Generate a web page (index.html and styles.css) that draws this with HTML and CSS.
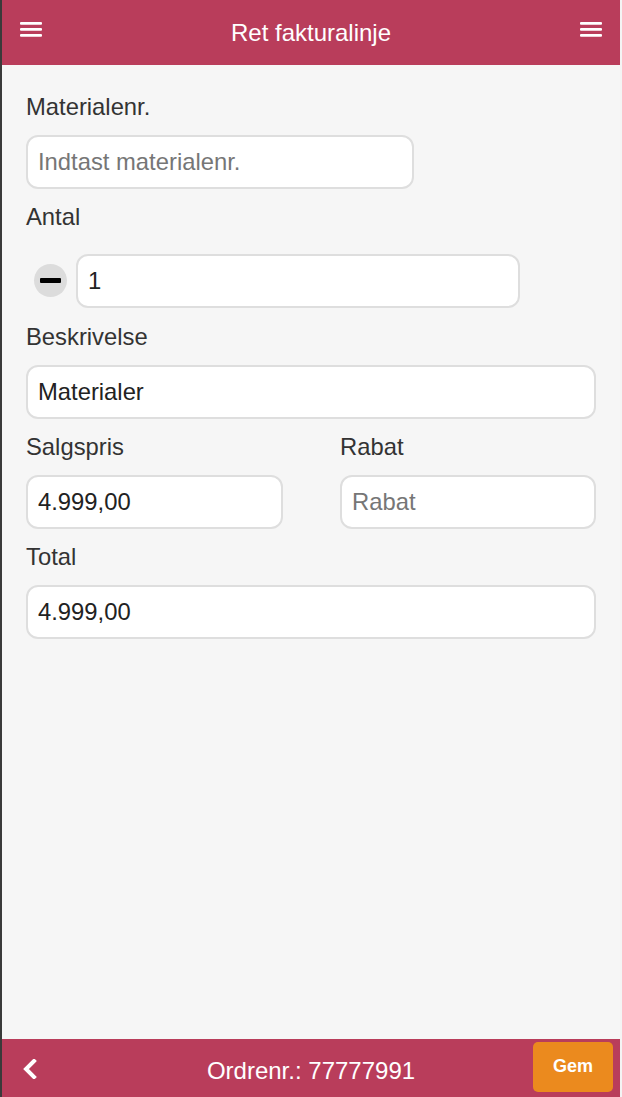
FILE: index.html
```html
<!DOCTYPE html>
<html lang="da">
<head>
<meta charset="utf-8">
<title>Ret fakturalinje</title>
<link rel="stylesheet" href="styles.css">
</head>
<body>
<div class="page">
  <header class="topbar">
    <span class="menu-icon">
      <svg width="22" height="15" viewBox="0 0 22 15"><rect x="0" y="0" width="22" height="2.8" rx="1"/><rect x="0" y="6" width="22" height="2.8" rx="1"/><rect x="0" y="12" width="22" height="2.8" rx="1"/></svg>
    </span>
    <h1 class="title">Ret fakturalinje</h1>
    <span class="menu-icon">
      <svg width="22" height="15" viewBox="0 0 22 15"><rect x="0" y="0" width="22" height="2.8" rx="1"/><rect x="0" y="6" width="22" height="2.8" rx="1"/><rect x="0" y="12" width="22" height="2.8" rx="1"/></svg>
    </span>
  </header>

  <main class="content">
    <label class="label">Materialenr.</label>
    <input class="field field-material" type="text" placeholder="Indtast materialenr.">

    <label class="label">Antal</label>
    <div class="qty-row">
      <span class="minus"><span class="minus-bar"></span></span>
      <input class="field field-qty" type="text" value="1">
    </div>

    <label class="label">Beskrivelse</label>
    <input class="field" type="text" value="Materialer">

    <div class="two-col">
      <div class="col">
        <label class="label">Salgspris</label>
        <input class="field" type="text" value="4.999,00">
      </div>
      <div class="col">
        <label class="label">Rabat</label>
        <input class="field" type="text" placeholder="Rabat">
      </div>
    </div>

    <label class="label">Total</label>
    <input class="field" type="text" value="4.999,00">
  </main>

  <footer class="bottombar">
    <span class="back">
      <svg width="16" height="20" viewBox="0 0 16 20"><polyline points="12,2 4,10 12,18" fill="none" stroke="#fff" stroke-width="4" stroke-linecap="square"/></svg>
    </span>
    <span class="order">Ordrenr.: 77777991</span>
    <button class="save" type="button">Gem</button>
  </footer>
</div>
</body>
</html>
```

FILE: styles.css
```css
html, body {
  margin: 0;
  padding: 0;
  background: #f4f4f4;
  height: 100%;
}

body {
  font-family: "Liberation Sans", Arial, sans-serif;
}

.page {
  width: 618px;
  height: 100vh;
  border-left: 2px solid #3a3a3a;
  background: #f6f6f6;
  display: flex;
  flex-direction: column;
}

.topbar {
  height: 65px;
  flex: none;
  background: #b93d5b;
  display: flex;
  align-items: center;
  padding: 0 18px;
  box-sizing: border-box;
}

.menu-icon {
  width: 22px;
  height: 15px;
  align-self: flex-start;
  margin-top: 22px;
  display: block;
}

.menu-icon svg {
  display: block;
  fill: #fff;
}

.title {
  flex: 1;
  margin: 0;
  text-align: center;
  color: #fff;
  font-weight: normal;
  font-size: 24px;
  line-height: 28px;
}

.content {
  flex: 1;
  padding: 28px 24px 0;
  display: flex;
  flex-direction: column;
  align-items: flex-start;
}

.label {
  display: block;
  font-size: 23.8px;
  line-height: 28px;
  color: #333;
  margin-bottom: 14px;
}

.field {
  display: block;
  box-sizing: border-box;
  width: 570px;
  height: 54px;
  margin: 0 0 14px;
  padding: 0 10px;
  border: 2px solid #dedede;
  border-radius: 12px;
  background: #fff;
  font-family: "Liberation Sans", Arial, sans-serif;
  font-size: 23.8px;
  color: #222;
  outline: none;
}

.field::placeholder {
  color: #767676;
}

.field-material {
  width: 388px;
}

.qty-row {
  display: flex;
  align-items: center;
  margin-top: 9px;
  margin-bottom: 1px;
}

.minus {
  width: 33px;
  height: 33px;
  border-radius: 50%;
  background: #dcdcdc;
  margin-left: 8px;
  margin-right: 9px;
  margin-bottom: 16px;
  display: flex;
  align-items: center;
  justify-content: center;
  flex: none;
}

.minus-bar {
  width: 21px;
  height: 5px;
  background: #000;
  border-radius: 1px;
}

.field-qty {
  width: 444px;
}

.two-col {
  display: grid;
  grid-template-columns: 257px 256px;
  column-gap: 57px;
  width: 570px;
}

.col .field {
  width: 100%;
}

.bottombar {
  height: 58px;
  flex: none;
  background: #b93d5b;
  display: grid;
  grid-template-columns: 1fr auto 1fr;
  align-items: center;
}

.back {
  justify-self: start;
  margin-left: 20px;
  margin-top: 2px;
  display: block;
  width: 16px;
  height: 20px;
}

.back svg {
  display: block;
}

.order {
  color: #fff;
  font-size: 24px;
  line-height: 28px;
  padding-top: 5px;
}

.save {
  justify-self: end;
  margin-right: 7px;
  margin-top: -2px;
  width: 80px;
  height: 50px;
  border: none;
  border-radius: 5px;
  background: #eb8a1e;
  color: #fff;
  font-family: "Liberation Sans", Arial, sans-serif;
  font-weight: bold;
  font-size: 18px;
  padding: 0 0 2px;
}
```
